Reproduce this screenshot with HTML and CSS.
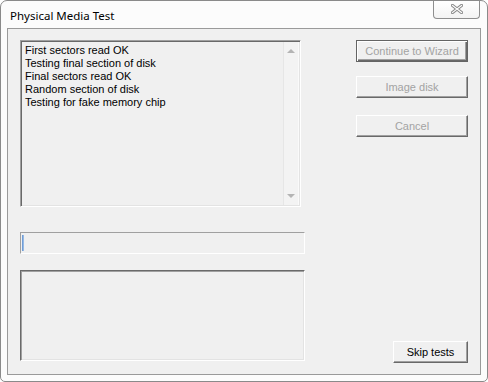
FILE: index.html
```html
<!DOCTYPE html>
<html>
<head>
<meta charset="utf-8">
<link rel="stylesheet" href="styles.css">
</head>
<body>
<div class="window">
  <div class="titlebar">
    <span class="title">Physical Media Test</span>
    <div class="close">
      <svg width="12" height="10" viewBox="0 0 12 10">
        <path d="M1.5 1.5 L10.5 8.5 M10.5 1.5 L1.5 8.5" stroke="#8a8a8a" stroke-width="3.2" stroke-linecap="square" fill="none"/>
        <path d="M1.5 1.5 L10.5 8.5 M10.5 1.5 L1.5 8.5" stroke="#ffffff" stroke-width="1.2" stroke-linecap="square" fill="none"/>
      </svg>
    </div>
  </div>
  <div class="client">
    <div class="left">
      <div class="listbox">
        <div class="lines">
          <div>First sectors read OK</div>
          <div>Testing final section of disk</div>
          <div>Final sectors read OK</div>
          <div>Random section of disk</div>
          <div>Testing for fake memory chip</div>
        </div>
        <div class="scrollbar">
          <span class="arrow up"></span>
          <span class="arrow down"></span>
        </div>
      </div>
      <div class="progress"><span class="fill"></span></div>
      <div class="panel"></div>
    </div>
    <div class="right">
      <div class="btn default disabled b1">Continue to Wizard</div>
      <div class="btn disabled b2">Image disk</div>
      <div class="btn disabled b3">Cancel</div>
      <div class="btn skip">Skip tests</div>
    </div>
  </div>
</div>
</body>
</html>
```
FILE: styles.css
```css
* { box-sizing: border-box; }
html, body { margin: 0; padding: 0; background: #ffffff; }
body { width: 488px; height: 382px; overflow: hidden; }

.window {
  width: 488px;
  height: 382px;
  border: 1px solid #8a8a8a;
  border-radius: 7px 7px 5px 5px;
  background: #fcfcfc;
  display: flex;
  flex-direction: column;
  padding: 0 6px 6px 6px;
}

.titlebar {
  height: 27px;
  display: flex;
  align-items: center;
}
.title {
  font-family: "Noto Sans", "Liberation Sans", sans-serif;
  font-size: 11.5px;
  color: #000;
  padding-left: 3px;
  padding-top: 1px;
}
.close {
  margin-left: auto;
  margin-right: 1px;
  align-self: flex-start;
  width: 47px;
  height: 18px;
  border: 1px solid #8e8e8e;
  border-top: none;
  border-radius: 0 0 4px 4px;
  background: linear-gradient(#ffffff, #f3f3f3);
  display: flex;
  align-items: center;
  justify-content: center;
  padding-bottom: 1px;
}

.client {
  flex: 1;
  border: 1px solid #9a9a9a;
  background: #f0f0f0;
  padding: 11px 12px 11px 12px;
  display: flex;
  justify-content: space-between;
  font-family: "Liberation Sans", Arial, sans-serif;
  font-size: 11px;
}

.left {
  width: 285px;
  display: flex;
  flex-direction: column;
}

.listbox {
  width: 281px;
  height: 167px;
  border: 1px solid;
  border-color: #a0a0a0 #ffffff #ffffff #a0a0a0;
  box-shadow: inset 1px 1px 0 #696969, inset -1px -1px 0 #e3e3e3;
  display: flex;
  padding: 1px 1px 1px 1px;
}
.lines {
  flex: 1;
  padding: 2px 0 0 3px;
  line-height: 13px;
  color: #000;
}
.scrollbar {
  width: 16px;
  background: #f3f3f3;
  border-left: 1px solid #e6e6e6;
  border-right: 1px solid #fafafa;
  display: flex;
  flex-direction: column;
  justify-content: space-between;
  align-items: center;
  padding: 7px 0 7px 0;
}
.arrow {
  width: 0;
  height: 0;
  border-left: 4px solid transparent;
  border-right: 4px solid transparent;
}
.arrow.up { border-bottom: 4px solid #b4b4b4; }
.arrow.down { border-top: 4px solid #b4b4b4; }

.progress {
  margin-top: 25px;
  height: 22px;
  border: 1px solid;
  border-color: #a0a0a0 #ffffff #ffffff #a0a0a0;
  padding: 2px 0 2px 1px;
  display: flex;
}
.fill {
  width: 2px;
  background: linear-gradient(90deg, #5d8fd0, #a9c7ea);
}

.panel {
  margin-top: 16px;
  height: 91px;
  border: 1px solid;
  border-color: #6a6a6a #ffffff #ffffff #6a6a6a;
  box-shadow: inset 1px 1px 0 #a0a0a0, inset -1px -1px 0 #e3e3e3;
}

.right {
  width: 112px;
  display: flex;
  flex-direction: column;
}
.btn {
  height: 22px;
  display: flex;
  align-items: center;
  justify-content: center;
  border: 1px solid;
  border-color: #ffffff #696969 #696969 #ffffff;
  box-shadow: inset -1px -1px 0 #a0a0a0;
  color: #000;
  background: #f0f0f0;
}
.btn.disabled { color: #a3a3a3; }
.btn.default {
  border: 1px solid #646464;
  box-shadow: inset 1px 1px 0 #ffffff, inset -1px -1px 0 #696969, inset -2px -2px 0 #a0a0a0;
}
.b1 { margin-top: 0; }
.b2 { margin-top: 14px; }
.b3 { margin-top: 17px; }
.skip {
  margin-top: auto;
  margin-left: auto;
  width: 75px;
}
```
